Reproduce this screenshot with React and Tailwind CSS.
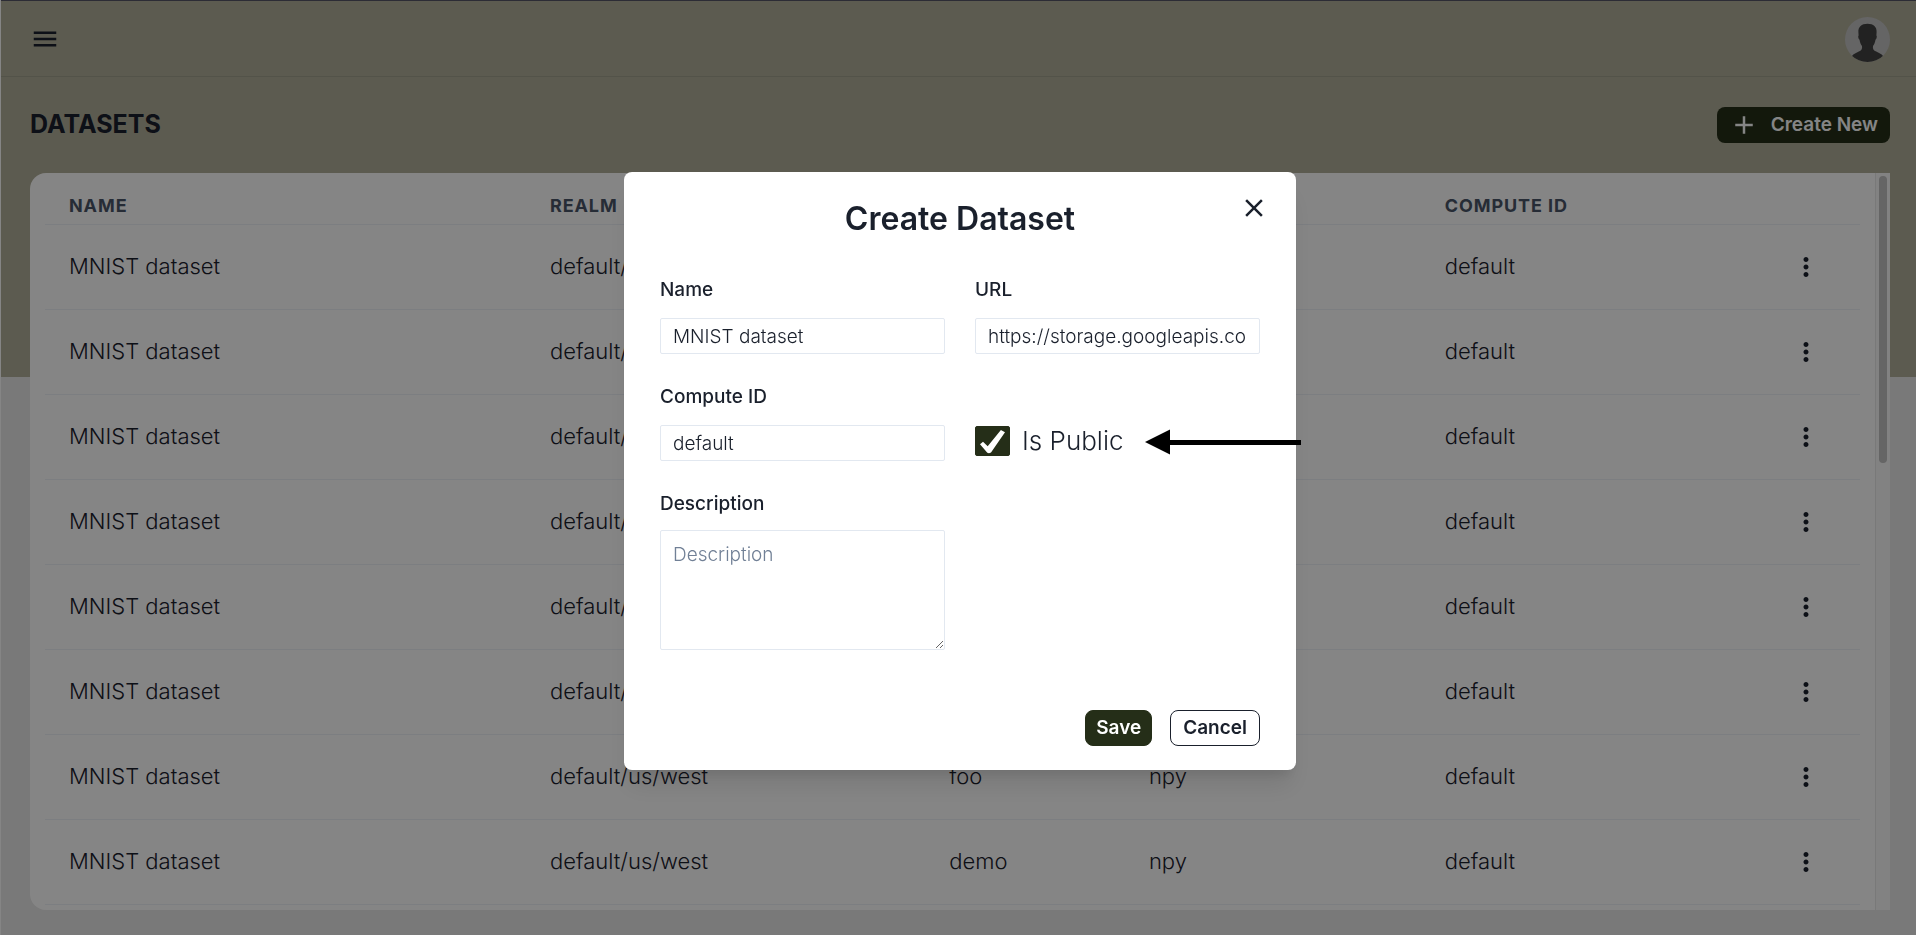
import { useState } from "react";
import { MdMenu, MdClose, MdAdd, MdMoreVert } from "react-icons/md";

const rows = [
  ["MNIST dataset", "default/us/west", "demo", "npy", "default"],
  ["MNIST dataset", "default/us/west", "foo", "npy", "default"],
  ["MNIST dataset", "default/us/west", "demo", "npy", "default"],
  ["MNIST dataset", "default/us/west", "foo", "npy", "default"],
  ["MNIST dataset", "default/us/west", "demo", "npy", "default"],
  ["MNIST dataset", "default/us/west", "foo", "npy", "default"],
  ["MNIST dataset", "default/us/west", "foo", "npy", "default"],
  ["MNIST dataset", "default/us/west", "demo", "npy", "default"],
];

function Avatar() {
  return (
    <svg viewBox="0 0 45 45" className="size-[45px] rounded-full" aria-hidden="true">
      <rect width="45" height="45" fill="#c2c2c2" />
      <path
        fill="#424242"
        d="M22.5 6.800c-6 0-9.400 3.200-9.100 8.200l.2 3.400c-.8.400-.4 3 .9 4.300.4 2.600 1.200 4.600 2.500 6.200.5 3-.6 4.400-3.200 5.700C11.300 35.800 8.500 37 7 39v6h31v-6c-1.500-2-4.300-3.200-6.800-4.400-2.600-1.300-3.700-2.700-3.200-5.700 1.300-1.600 2.100-3.600 2.500-6.200 1.300-1.300 1.700-3.900.9-4.300l.2-3.400C31.900 10 28.500 6.800 22.500 6.800z"
      />
    </svg>
  );
}

function Header() {
  return (
    <header className="flex h-[77px] shrink-0 items-center justify-between border-t border-b border-t-[#555566] border-b-[#a09f8c] pt-px pr-[26px] pl-[29px]">
      <button type="button" aria-label="Menu">
        <MdMenu size={30} />
      </button>
      <button type="button" aria-label="Account">
        <Avatar />
      </button>
    </header>
  );
}

function DatasetTable() {
  return (
    <table className="w-full table-fixed border-collapse text-left text-[22px]">
      <colgroup>
        <col className="w-[26.5%]" />
        <col className="w-[22%]" />
        <col className="w-[11%]" />
        <col className="w-[16.3%]" />
        <col />
        <col className="w-[108px]" />
      </colgroup>
      <thead>
        <tr className="h-[51px] border-b border-[#edf2f7] align-bottom text-lg leading-6 font-bold tracking-wider text-[#4a5568]">
          <th className="px-6 pb-1.5">NAME</th>
          <th className="px-6 pb-1.5">REALM</th>
          <th aria-label="Group" />
          <th aria-label="Format" />
          <th className="px-6 pb-1.5">COMPUTE ID</th>
          <th aria-label="Actions" />
        </tr>
      </thead>
      <tbody>
        {rows.map((row, i) => (
          <tr key={i} className="h-[85px] border-b border-[#edf2f7] font-light">
            {row.map((cell, j) => (
              <td key={j} className="px-6">
                {cell}
              </td>
            ))}
            <td>
              <button type="button" aria-label="Row actions" className="mx-auto block">
                <MdMoreVert size={30} />
              </button>
            </td>
          </tr>
        ))}
      </tbody>
    </table>
  );
}

function TextField({ id, label, value }) {
  return (
    <div>
      <label htmlFor={id} className="block text-[19px] leading-7 font-medium">
        {label}
      </label>
      <input
        id={id}
        type="text"
        defaultValue={value}
        className="mt-[14px] block h-9 w-full rounded-xs border border-[#e2e8f0] px-3 text-[19px] leading-7 font-light"
      />
    </div>
  );
}

function CreateDialog() {
  const [isPublic, setIsPublic] = useState(true);
  return (
    <div className="fixed inset-0 flex items-start justify-center bg-black/48 pt-[172px] pl-1">
      <form
        role="dialog"
        aria-labelledby="dialog-title"
        className="relative w-full max-w-2xl rounded-lg bg-white px-9 pt-6 pb-6 shadow-[0_20px_25px_-5px_rgba(0,0,0,0.1),0_10px_10px_-5px_rgba(0,0,0,0.08)]"
        onSubmit={(e) => e.preventDefault()}
      >
        <h2 id="dialog-title" className="text-center text-[32px] leading-[46px] font-semibold">
          Create Dataset
        </h2>
        <button type="button" aria-label="Close" className="absolute top-[21px] right-[27px]">
          <MdClose size={30} />
        </button>

        <div className="mt-[34px] grid grid-cols-2 gap-x-[30px] gap-y-[29px]">
          <TextField id="name" label="Name" value="MNIST dataset" />
          <TextField
            id="url"
            label="URL"
            value="https://storage.googleapis.com/tensorflow/tf-keras-datasets/mnist.npz"
          />
          <TextField id="compute" label="Compute ID" value="default" />
          <div className="relative flex items-end gap-3 pb-[5px]">
            <span className="grid">
              <input
                id="is-public"
                type="checkbox"
                checked={isPublic}
                onChange={(e) => setIsPublic(e.target.checked)}
                className="col-start-1 row-start-1 h-[30px] w-[35px] appearance-none rounded-xs border border-[#252e18] checked:bg-[#252e18]"
              />
              {isPublic && (
                <svg
                  viewBox="0 0 35 30"
                  className="pointer-events-none col-start-1 row-start-1 h-[30px] w-[35px]"
                  aria-hidden="true"
                >
                  <path
                    d="M5 18.300L8 15.800L12.700 20.200L25.900 4L30 6.200L16 26.600Q14 27.600 12.300 26.800z"
                    fill="#fff"
                  />
                </svg>
              )}
            </span>
            <label htmlFor="is-public" className="text-[26px] leading-[30px] font-light">
              Is Public
            </label>
            <svg
              viewBox="0 0 156 26"
              className="pointer-events-none absolute right-[-41px] bottom-[6px] h-[26px] w-[156px]"
              aria-hidden="true"
            >
              <path d="M0 13L25 0.500V25.500z" />
              <path d="M24 11H156V16H24z" />
            </svg>
          </div>
          <div>
            <label htmlFor="description" className="block text-[19px] leading-7 font-medium">
              Description
            </label>
            <textarea
              id="description"
              placeholder="Description"
              className="mt-3 block h-[120px] w-full resize rounded-xs border border-[#e2e8f0] px-3 py-2.5 text-[19px] leading-7 font-light placeholder:text-[#718096]"
            />
          </div>
        </div>

        <div className="mt-[60px] flex justify-end gap-[18px] text-[19px] leading-[34px] font-semibold">
          <button type="submit" className="rounded-lg border border-[#252e18] bg-[#252e18] px-2.5 text-white">
            Save
          </button>
          <button type="button" className="rounded-lg border border-[#1a202c] px-3">
            Cancel
          </button>
        </div>
      </form>
    </div>
  );
}

export default function App() {
  return (
    <div className="flex h-screen flex-col overflow-hidden border-l border-white bg-[linear-gradient(#b1af9a_377px,#e8e8e8_377px)] font-[Inter,sans-serif] text-[#1a202c]">
      <Header />
      <main className="flex min-h-0 flex-1 flex-col pr-[26px] pb-[25px] pl-[29px]">
        <div className="flex h-24 shrink-0 items-center justify-between">
          <h1 className="text-[25px] font-bold">DATASETS</h1>
          <button
            type="button"
            className="flex h-9 items-center gap-3 rounded-lg bg-[#252e18] px-3 text-[19px] font-semibold text-white"
          >
            <MdAdd size={30} />
            Create New
          </button>
        </div>
        <section className="flex min-h-0 flex-1 overflow-hidden rounded-l-2xl bg-white">
          <div className="min-w-0 flex-1 overflow-hidden px-[15px]">
            <DatasetTable />
          </div>
          <div className="w-[15px] border-l border-[#e8e8e8] bg-[#fafafa] py-[3px] pl-[3px]">
            <div className="h-[287px] w-2 rounded-full bg-[#c1c1c1]" />
          </div>
        </section>
      </main>
      <CreateDialog />
    </div>
  );
}
